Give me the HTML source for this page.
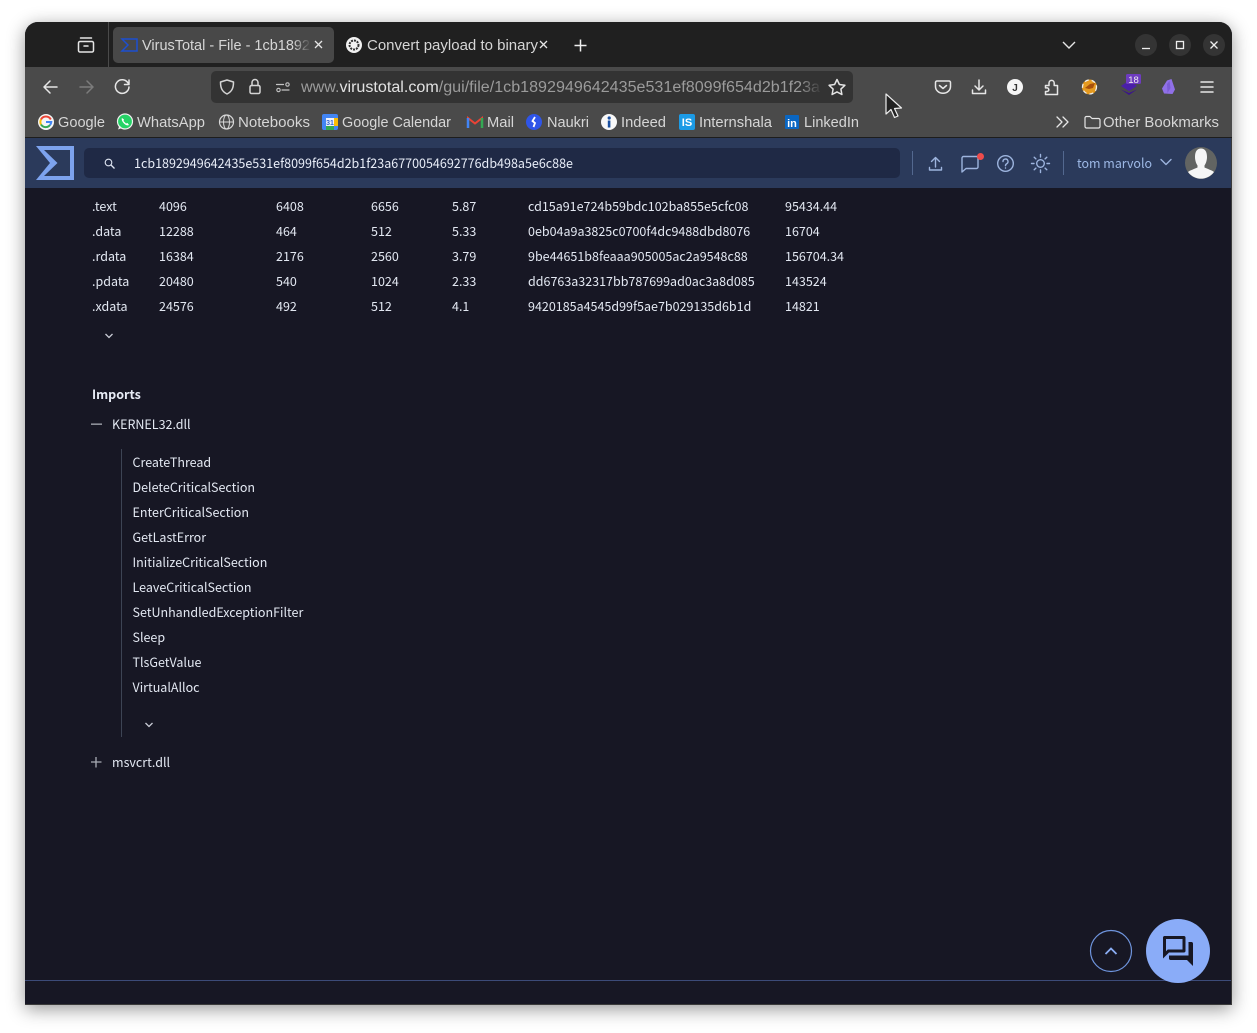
<!DOCTYPE html>
<html lang="en">
<head>
<meta charset="utf-8">
<title>VirusTotal - File</title>
<style>
html,body{margin:0;padding:0;background:#fff;width:1257px;height:1033px;overflow:hidden}
#win{position:absolute;left:25px;top:22px;width:1207px;height:983px;border-radius:13px 13px 0 0;box-shadow:0 4px 18px rgba(0,0,0,.42);background:#171724}
svg{position:absolute;left:0;top:0}
.b{font-family:"Liberation Sans",sans-serif;font-size:15px;fill:#d6d6d6}
.c{font-family:"Noto Sans CJK JP","Liberation Sans",sans-serif;font-size:12.5px;fill:#e3e8f2}
.h{font-family:"Noto Sans CJK JP","Liberation Sans",sans-serif;font-size:13px;fill:#e8edf8}
.i{fill:none;stroke:#e6e6e6;stroke-width:1.5;stroke-linecap:round;stroke-linejoin:round}
.n{fill:none;stroke:#9db4de;stroke-width:1.4;stroke-linecap:round;stroke-linejoin:round}
</style>
</head>
<body>
<div id="win"></div>
<svg width="1257" height="1033" viewBox="0 0 1257 1033" xmlns="http://www.w3.org/2000/svg">
<defs>
<clipPath id="w"><path d="M25 1005V35a13 13 0 0 1 13-13H1219a13 13 0 0 1 13 13V1005Z"/></clipPath>
<linearGradient id="f1"><stop offset="0" stop-color="#333" stop-opacity="0"/><stop offset="1" stop-color="#333"/></linearGradient>
<linearGradient id="f2"><stop offset="0" stop-color="#484848" stop-opacity="0"/><stop offset="1" stop-color="#484848"/></linearGradient>
</defs>
<g clip-path="url(#w)">
<rect x="25" y="22" width="1207" height="45" fill="#202020"/>
<rect x="25" y="67" width="1207" height="70" fill="#4a4a4a"/>
<rect x="25" y="137" width="1207" height="1" fill="#1d1d1d"/>
<rect x="25" y="138" width="1207" height="50" fill="#2b3a5b"/>
<rect x="25" y="188" width="1207" height="817" fill="#171724"/>
<rect x="25" y="980" width="1207" height="1" fill="#3c4b78"/>
<rect x="1231" y="138" width="1" height="867" fill="#3a3a3a"/>
<rect x="25" y="1004" width="1207" height="1" fill="#3a3a3a"/>
</g>

<!-- tab bar -->
<path class="i" d="M80.500 38h11M80 41.500h12a1.500 1.500 0 0 1 1.500 1.500v7.500a1.500 1.500 0 0 1-1.500 1.500H80a1.500 1.500 0 0 1-1.500-1.500V43A1.500 1.500 0 0 1 80 41.500zM84 46h4"/>
<rect x="108" y="22" width="1" height="45" fill="#4a4a4a"/>
<rect x="113" y="27" width="221" height="36" rx="5" fill="#484848"/>
<path d="M122 39h15v12h-15l6-6z" fill="none" stroke="#1c4fd0" stroke-width="1.500"/>
<text class="b" x="142" y="50" textLength="168" lengthAdjust="spacingAndGlyphs">VirusTotal - File - 1cb1892</text>
<rect x="293" y="30" width="18" height="30" fill="url(#f2)"/>
<path d="M315 41l7 7M322 41l-7 7" stroke="#e6e6e6" stroke-width="1.300" fill="none"/>
<circle cx="354" cy="45" r="8" fill="#f2f2f2"/>
<circle cx="354" cy="45" r="4.500" fill="none" stroke="#333" stroke-width="2" stroke-dasharray="2 1"/>
<text class="b" x="367" y="50" textLength="171" lengthAdjust="spacingAndGlyphs">Convert payload to binary</text>
<path d="M540 41l7 7M547 41l-7 7" stroke="#e6e6e6" stroke-width="1.300" fill="none"/>
<path d="M580.500 39.500v12M574.500 45.500h12" stroke="#eee" stroke-width="1.500" fill="none"/>
<path d="M1063 42l6 6 6-6" fill="none" stroke="#e6e6e6" stroke-width="1.400"/>
<circle cx="1146" cy="45" r="11" fill="#343434"/><circle cx="1180" cy="45" r="11" fill="#343434"/><circle cx="1214" cy="45" r="11" fill="#343434"/>
<path d="M1142 48.500h8" stroke="#eee" stroke-width="1.300"/>
<rect x="1176.500" y="41.500" width="7" height="7" fill="none" stroke="#eee" stroke-width="1.300"/>
<path d="M1210.500 41.500l7 7M1217.500 41.500l-7 7" stroke="#eee" stroke-width="1.300"/>

<!-- toolbar -->
<path class="i" d="M57 87H44M50 81l-6 6 6 6"/>
<path d="M93 87H80M87 81l6 6-6 6" fill="none" stroke="#7c7c7c" stroke-width="1.500" stroke-linecap="round" stroke-linejoin="round"/>
<path class="i" d="M128 83a6.800 6.800 0 1 0 1 4M129 80v4.500h-4.500"/>
<rect x="211" y="71" width="642" height="32" rx="5" fill="#333"/>
<path class="i" d="M227 80l6.500 2c0 6-1.500 9.500-6.500 12-5-2.500-6.500-6-6.500-12z" style="stroke:#d4d4d4"/>
<rect x="250" y="85.500" width="10" height="8" rx="1.500" class="i" style="stroke:#d4d4d4"/>
<path class="i" d="M252 85.500v-3a3 3 0 0 1 6 0v3" style="stroke:#d4d4d4"/>
<path class="i" d="M276.500 84.500h7M282 90h7" style="stroke:#c4c4c4;stroke-width:1.200"/>
<circle cx="287.500" cy="84.500" r="1.700" class="i" style="stroke:#c4c4c4;stroke-width:1.100"/>
<circle cx="278.500" cy="90" r="1.700" class="i" style="stroke:#c4c4c4;stroke-width:1.100"/>
<text x="301" y="92" font-family="Liberation Sans,sans-serif" font-size="15.500" fill="#9b9b9b" textLength="519" lengthAdjust="spacingAndGlyphs">www.<tspan fill="#e2e2e2">virustotal.com</tspan>/gui/file/1cb1892949642435e531ef8099f654d2b1f23a</text>
<rect x="800" y="72" width="22" height="30" fill="url(#f1)"/>
<path class="i" d="M837 79.500l2.400 5 5.500.8-4 3.800 1 5.400-4.900-2.600-4.900 2.600 1-5.400-4-3.800 5.500-.8z" style="stroke:#e4e4e4"/>
<path class="i" d="M937 81h12a1.500 1.500 0 0 1 1.500 1.500v4a7.500 6.800 0 0 1-15 0v-4A1.500 1.500 0 0 1 937 81zM939.500 85.500l3.500 3 3.500-3"/>
<path class="i" d="M979 80v10M975 86l4 4 4-4M972.500 90v3.500h13V90"/>
<circle cx="1015" cy="87" r="8" fill="#f5f5f5"/>
<text x="1015" y="91" font-family="Liberation Sans,sans-serif" font-size="10" font-weight="700" fill="#333" text-anchor="middle">J</text>
<path class="i" d="M1045.500 85.500H1049V83a2.600 2.600 0 0 1 5.200 0v2.500h3.300v9h-12v-3h1.500a1.800 1.800 0 0 0 0-3.600h-1.500z"/>
<circle cx="1089.500" cy="87" r="7.500" fill="#e59a20"/>
<circle cx="1089.500" cy="87" r="7" fill="none" stroke="#eee" stroke-width="1.300" stroke-dasharray="4 3"/>
<path d="M1085 88l5-4 5-1-2 5-4 1z" fill="#a8500c"/>
<path d="M1129 80.500l8 5.500-8 5-8-5z" fill="#4a1fa8"/>
<path d="M1121 89.500l8 5.500 8-5.500-8 3.500z" fill="#3a138c"/>
<rect x="1126" y="74" width="15" height="10" rx="1.500" fill="#6e3cc0"/>
<text x="1133.500" y="82.800" font-family="Liberation Sans,sans-serif" font-size="9.500" fill="#eee" text-anchor="middle">18</text>
<path d="M1167 80.500l4.500-1.500 3.500 10.500-2.500 4.500-8.500-.5-2-5z" fill="#9070e8"/>
<path d="M1167 84l2.500-3 1 7-3 5z" fill="#7b5cd6"/>
<path class="i" d="M1201 82h12M1201 87h12M1201 92h12"/>
<path d="M886 94v20l5-4.500 3.500 8 3.500-1.500-3.500-7.500 7-.5z" fill="#222" stroke="#eee" stroke-width="1.200" stroke-linejoin="round"/>

<!-- bookmarks -->
<circle cx="46" cy="122" r="8" fill="#f5f5f5"/>
<path d="M50.800 119.500A5.500 5.500 0 0 0 41 119.500" fill="none" stroke="#ea4335" stroke-width="2"/>
<path d="M41 119.500a5.500 5.500 0 0 0 0 5" fill="none" stroke="#fbbc05" stroke-width="2"/>
<path d="M41 124.500a5.500 5.500 0 0 0 9 .5" fill="none" stroke="#34a853" stroke-width="2"/>
<path d="M46 122h5.300a5.500 5.500 0 0 1-1.300 3" fill="none" stroke="#4285f4" stroke-width="2"/>
<text class="b" x="58" y="127" textLength="47" lengthAdjust="spacingAndGlyphs">Google</text>
<circle cx="125" cy="121.500" r="7.500" fill="#25d366" stroke="#f0f0f0" stroke-width="1.200"/>
<path d="M118 129.500l1.500-4 2.500 2.500z" fill="#f0f0f0"/>
<path d="M122 118c-1 1.500.5 4 2 5.500s3.500 2.500 5 1.500l-1.500-2-1.500.5-2.500-2.500.5-1.500z" fill="#fff"/>
<text class="b" x="137" y="127" textLength="68" lengthAdjust="spacingAndGlyphs">WhatsApp</text>
<circle cx="226.500" cy="122" r="7" fill="none" stroke="#d8d8d8" stroke-width="1.200"/>
<ellipse cx="226.500" cy="122" rx="3" ry="7" fill="none" stroke="#d8d8d8" stroke-width="1"/>
<path d="M219.500 122h14" stroke="#d8d8d8"/>
<text class="b" x="238" y="127" textLength="72" lengthAdjust="spacingAndGlyphs">Notebooks</text>
<rect x="322" y="114" width="16" height="16" rx="2" fill="#4285f4"/>
<rect x="334" y="118" width="4" height="8" fill="#fbbc05"/>
<rect x="326" y="126" width="8" height="4" fill="#34a853"/>
<rect x="326" y="118" width="8" height="8" fill="#eef2fb"/>
<text x="330" y="125" font-family="Liberation Sans,sans-serif" font-size="7" font-weight="700" fill="#3367d6" text-anchor="middle">31</text>
<text class="b" x="342" y="127" textLength="109" lengthAdjust="spacingAndGlyphs">Google Calendar</text>
<path d="M468 128v-10l7 5.500 7-5.500v10" fill="none" stroke="#ea4335" stroke-width="2"/>
<path d="M468 118v10" stroke="#4285f4" stroke-width="2.500"/><path d="M482 118v10" stroke="#34a853" stroke-width="2.500"/>
<text class="b" x="487" y="127" textLength="27" lengthAdjust="spacingAndGlyphs">Mail</text>
<circle cx="534" cy="122" r="8" fill="#2f55e8"/>
<path d="M535 117l-2.500 4 2.500 2-1.500 4" fill="none" stroke="#fff" stroke-width="1.800"/>
<text class="b" x="547" y="127" textLength="42" lengthAdjust="spacingAndGlyphs">Naukri</text>
<circle cx="609" cy="122" r="8" fill="#f8f8f8"/>
<rect x="607.800" y="120.500" width="2.600" height="7" fill="#1a4fa0"/><circle cx="609.200" cy="118" r="1.600" fill="#1a4fa0"/>
<text class="b" x="621" y="127" textLength="45" lengthAdjust="spacingAndGlyphs">Indeed</text>
<rect x="679" y="114" width="16" height="16" rx="2" fill="#1c9be6"/>
<text x="687" y="126" font-family="Liberation Sans,sans-serif" font-size="11" font-weight="700" fill="#fff" text-anchor="middle">IS</text>
<text class="b" x="699" y="127" textLength="73" lengthAdjust="spacingAndGlyphs">Internshala</text>
<rect x="785" y="115" width="14" height="14" rx="1" fill="#0a66c2"/>
<text x="792" y="127" font-family="Liberation Sans,sans-serif" font-size="11" font-weight="700" fill="#fff" text-anchor="middle">in</text>
<text class="b" x="804" y="127" textLength="55" lengthAdjust="spacingAndGlyphs">LinkedIn</text>
<path class="i" d="M1057 117l5 5-5 5M1063 117l5 5-5 5" style="stroke-width:1.300"/>
<path class="i" d="M1085 118a1.500 1.500 0 0 1 1.500-1.500h3.500l2 2h6.500a1.500 1.500 0 0 1 1.500 1.500v6.500a1.500 1.500 0 0 1-1.500 1.500h-12a1.500 1.500 0 0 1-1.500-1.500z" style="stroke-width:1.200"/>
<text class="b" x="1103" y="127" textLength="116" lengthAdjust="spacingAndGlyphs">Other Bookmarks</text>

<!-- VT header -->
<path fill-rule="evenodd" d="M36 146H74V180H36L50 163ZM44 150L57.500 163L44 176H70V150Z" fill="#7da3ee"/>
<rect x="84" y="148" width="816" height="30" rx="5" fill="#1f2945"/>
<circle cx="108.500" cy="162.500" r="3.300" fill="none" stroke="#dfe5f2" stroke-width="1.100"/>
<path d="M111 165l3.500 3.500" stroke="#dfe5f2" stroke-width="1.300"/>
<text class="h" x="134" y="168" textLength="439" lengthAdjust="spacingAndGlyphs">1cb1892949642435e531ef8099f654d2b1f23a6770054692776db498a5e6c88e</text>
<rect x="912" y="151" width="1" height="24" fill="#53688f"/>
<path class="n" d="M935.500 167v-9M931.500 161.500l4-4 4 4M929.500 167.500v2.500h12v-2.500"/>
<path class="n" d="M963.500 156.500h13a1.500 1.500 0 0 1 1.500 1.500v9a1.500 1.500 0 0 1-1.500 1.500H966l-4 3.500V158a1.500 1.500 0 0 1 1.500-1.500z"/>
<circle cx="980.500" cy="156.500" r="3.500" fill="#ee4c4c"/>
<circle cx="1005.500" cy="163.500" r="7.800" class="n"/>
<path class="n" d="M1003 161.500a2.500 2.500 0 1 1 3.700 2.200c-.9.500-1.200 1-1.200 2M1005.500 168v.1"/>
<circle cx="1040.500" cy="163.500" r="3.800" class="n"/>
<path class="n" d="M1040.500 154.500v2.500M1040.500 170v2.500M1031.500 163.500h2.500M1047 163.500h2.500M1034.200 157.200l1.700 1.700M1045.100 168.100l1.700 1.700M1034.200 169.800l1.700-1.700M1045.100 158.900l1.700-1.700"/>
<rect x="1063" y="151" width="1" height="24" fill="#53688f"/>
<text x="1077" y="168" font-family="Noto Sans CJK JP,Liberation Sans,sans-serif" font-size="13" fill="#9db8e6" textLength="75" lengthAdjust="spacingAndGlyphs">tom marvolo</text>
<path class="n" d="M1161 159.500l5 5 5-5"/>
<circle cx="1201" cy="163" r="16" fill="#626462"/>
<path d="M1195 157c0-6 2.500-8.500 6-8.500s6 2.500 6 8.500c0 4-1.500 7-2.500 8.500v2c3 1.500 7 2.500 9.500 4.500a16 16 0 0 1-26 0c2.500-2 6.500-3 9.500-4.500v-2c-1-1.500-2.500-4.500-2.500-8.500z" fill="#f6f6f6"/>

<!-- table -->
<g class="c">
<text x="92" y="211">.text</text><text x="159" y="211">4096</text><text x="276" y="211">6408</text><text x="371" y="211">6656</text><text x="452" y="211">5.87</text><text x="528" y="211">cd15a91e724b59bdc102ba855e5cfc08</text><text x="785" y="211">95434.44</text>
<text x="92" y="236">.data</text><text x="159" y="236">12288</text><text x="276" y="236">464</text><text x="371" y="236">512</text><text x="452" y="236">5.33</text><text x="528" y="236">0eb04a9a3825c0700f4dc9488dbd8076</text><text x="785" y="236">16704</text>
<text x="92" y="261">.rdata</text><text x="159" y="261">16384</text><text x="276" y="261">2176</text><text x="371" y="261">2560</text><text x="452" y="261">3.79</text><text x="528" y="261">9be44651b8feaaa905005ac2a9548c88</text><text x="785" y="261">156704.34</text>
<text x="92" y="286">.pdata</text><text x="159" y="286">20480</text><text x="276" y="286">540</text><text x="371" y="286">1024</text><text x="452" y="286">2.33</text><text x="528" y="286">dd6763a32317bb787699ad0ac3a8d085</text><text x="785" y="286">143524</text>
<text x="92" y="311">.xdata</text><text x="159" y="311">24576</text><text x="276" y="311">492</text><text x="371" y="311">512</text><text x="452" y="311">4.1</text><text x="528" y="311">9420185a4545d99f5ae7b029135d6b1d</text><text x="785" y="311">14821</text>
</g>
<path d="M105.500 334l3.500 3.500 3.500-3.500" fill="none" stroke="#c9ccd6" stroke-width="1.300"/>

<!-- imports -->
<text x="92" y="399" font-family="Noto Sans CJK JP,Liberation Sans,sans-serif" font-size="12.5" font-weight="700" fill="#e8ecf6">Imports</text>
<rect x="91" y="423.500" width="11" height="1.300" fill="#a8abb4"/>
<text class="c" x="112" y="429">KERNEL32.dll</text>
<rect x="121" y="449" width="1" height="288" fill="#3d4454"/>
<g class="c">
<text x="132.500" y="467">CreateThread</text>
<text x="132.500" y="492">DeleteCriticalSection</text>
<text x="132.500" y="517">EnterCriticalSection</text>
<text x="132.500" y="542">GetLastError</text>
<text x="132.500" y="567">InitializeCriticalSection</text>
<text x="132.500" y="592">LeaveCriticalSection</text>
<text x="132.500" y="617">SetUnhandledExceptionFilter</text>
<text x="132.500" y="642">Sleep</text>
<text x="132.500" y="667">TlsGetValue</text>
<text x="132.500" y="692">VirtualAlloc</text>
</g>
<path d="M145.500 723l3.500 3.500 3.500-3.500" fill="none" stroke="#c9ccd6" stroke-width="1.300"/>
<path d="M96 757v10.500M91 762h10.500" stroke="#a8abb4" stroke-width="1.300" fill="none"/>
<text class="c" x="112" y="767">msvcrt.dll</text>

<!-- floating buttons -->
<circle cx="1111" cy="951" r="20.500" fill="#171724" stroke="#6f95de" stroke-width="1.200"/>
<path d="M1105.500 954l5.500-5.500 5.500 5.500" fill="none" stroke="#8aadf4" stroke-width="1.800"/>
<circle cx="1178" cy="951" r="32" fill="#8aacf8"/>
<g transform="translate(1160 933) scale(1.500)"><path fill="#171724" d="M15 4v7H5.170L4 12.170V4h11m1-2H3c-.55 0-1 .45-1 1v14l4-4h10c.55 0 1-.45 1-1V3c0-.55-.45-1-1-1zm5 4h-2v9H6v2c0 .55.45 1 1 1h11l4 4V7c0-.55-.45-1-1-1z"/></g>
</svg>
</body>
</html>
